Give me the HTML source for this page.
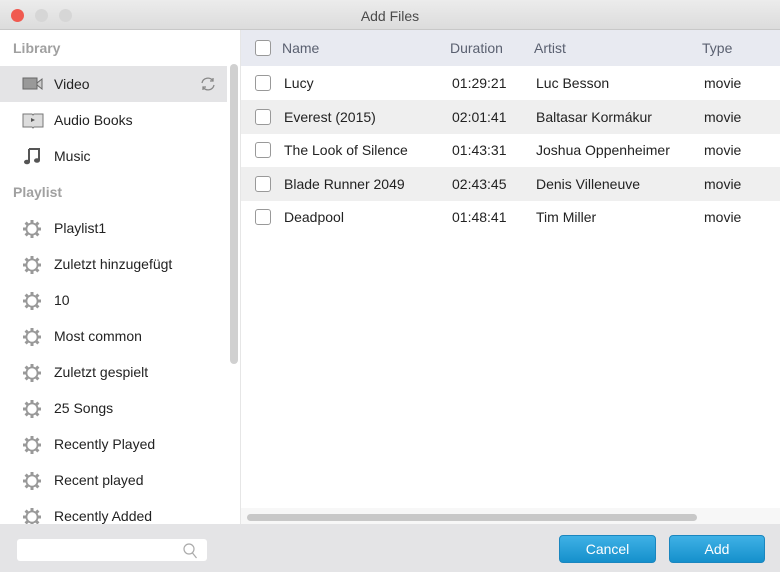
<!DOCTYPE html>
<html><head><style>
*{margin:0;padding:0;box-sizing:border-box}
body{width:780px;height:572px;font-family:"Liberation Sans",sans-serif;font-size:14px;color:#222;background:#fff;position:relative;overflow:hidden}
.title{position:absolute;left:0;top:0;width:780px;height:30px;background:linear-gradient(#ececec,#dcdcdc);border-bottom:1px solid #c8c8c8;text-align:center;line-height:32px;font-size:14px;color:#4a4a4a}
.dot{position:absolute;top:9px;width:13px;height:13px;border-radius:50%}
.side{position:absolute;left:0;top:30px;width:240px;height:494px;background:#fff;overflow:hidden}
.sh{position:absolute;left:13px;font-size:14px;font-weight:bold;color:#a0a0a0}
.si{position:absolute;left:0;width:227px;height:36px;line-height:36px;padding-left:54px}
.si svg{position:absolute;left:22px;top:9px}
.vs{position:absolute;left:230px;top:34px;width:8px;height:300px;border-radius:4px;background:#d0d0d0}
.tbl{position:absolute;left:240px;top:30px;width:540px;height:494px;background:#fff;border-left:1px solid #e6e6e6}
.row{position:absolute;left:0;width:540px;height:34px;line-height:34px}
.row span{position:absolute}
.cb{position:absolute;left:14px;top:9px;width:16px;height:16px;border:1px solid #999;border-radius:3px;background:#fff}
.bot{position:absolute;left:0;top:524px;width:780px;height:48px;background:#e4e4e6}
.btn{position:absolute;top:11px;height:28px;border-radius:4px;background:linear-gradient(#3fb1e6,#1590cc);border:1px solid #1a86bf;color:#fff;text-align:center;line-height:26px;font-size:14px}
</style></head><body>
<div class="title">Add Files
<div class="dot" style="left:11px;background:#f05a50"></div>
<div class="dot" style="left:35px;background:#d6d6d6"></div>
<div class="dot" style="left:59px;background:#d6d6d6"></div>
</div>
<div class="side">
<div class="sh" style="top:10px">Library</div>
<div class="si" style="top:36px;background:#e4e4e6">Video
<svg width="22" height="18" viewBox="0 0 22 18"><rect x="1" y="3" width="14" height="11" fill="#999" stroke="#666"/><path d="M15 8l5-4v10l-5-4z" fill="#ccc" stroke="#666"/></svg>
<svg style="left:200px;top:10px" width="16" height="16" viewBox="0 0 16 16" fill="none" stroke="#888" stroke-width="1.3"><path d="M2 7a6 6 0 0 1 11-2M14 9a6 6 0 0 1-11 2"/><path d="M13 2v3h-3M3 14v-3h3"/></svg></div>
<div class="si" style="top:72px">Audio Books
<svg width="22" height="18" viewBox="0 0 22 18"><path d="M1 3h9l1 1 1-1h9v13h-9l-1 1-1-1H1z" fill="#ddd" stroke="#777"/><path d="M9 7l4 2-4 2z" fill="#555"/></svg></div>
<div class="si" style="top:108px">Music
<svg width="22" height="18" viewBox="0 0 22 18"><path d="M7 2h10v11" stroke="#555" stroke-width="2" fill="none"/><path d="M7 2v13" stroke="#555" stroke-width="2"/><ellipse cx="5" cy="15" rx="3" ry="2.3" fill="#555"/><ellipse cx="15" cy="13.5" rx="3" ry="2.3" fill="#555"/></svg></div>
<div class="sh" style="top:154px">Playlist</div>
<svg width="0" height="0" style="position:absolute"><defs><g id="g"><circle cx="10" cy="10" r="6.5" fill="#999"/><g stroke="#999" stroke-width="3"><path d="M10 1v18M1 10h18M3.6 3.6l12.8 12.8M16.4 3.6L3.6 16.4"/></g><circle cx="10" cy="10" r="4.7" fill="#fff"/></g></defs></svg>
<div class="si" style="top:180px">Playlist1<svg width="22" height="20"><use href="#g"/></svg></div>
<div class="si" style="top:216px">Zuletzt hinzugefügt<svg width="22" height="20"><use href="#g"/></svg></div>
<div class="si" style="top:252px">10<svg width="22" height="20"><use href="#g"/></svg></div>
<div class="si" style="top:288px">Most common<svg width="22" height="20"><use href="#g"/></svg></div>
<div class="si" style="top:324px">Zuletzt gespielt<svg width="22" height="20"><use href="#g"/></svg></div>
<div class="si" style="top:360px">25 Songs<svg width="22" height="20"><use href="#g"/></svg></div>
<div class="si" style="top:396px">Recently Played<svg width="22" height="20"><use href="#g"/></svg></div>
<div class="si" style="top:432px">Recent played<svg width="22" height="20"><use href="#g"/></svg></div>
<div class="si" style="top:468px">Recently Added<svg width="22" height="20"><use href="#g"/></svg></div>
<div class="vs"></div>
</div>
<div class="tbl">
<div class="row" style="top:0;height:36px;line-height:36px;background:#e8eaf1;color:#5a6070"><div class="cb" style="top:10px"></div><span style="left:41px">Name</span><span style="left:209px">Duration</span><span style="left:293px">Artist</span><span style="left:461px">Type</span></div>
<div class="row" style="top:36px"><div class="cb"></div><span style="left:43px">Lucy</span><span style="left:211px">01:29:21</span><span style="left:295px">Luc Besson</span><span style="left:463px">movie</span></div>
<div class="row" style="top:70px;background:#efefef"><div class="cb"></div><span style="left:43px">Everest (2015)</span><span style="left:211px">02:01:41</span><span style="left:295px">Baltasar Kormákur</span><span style="left:463px">movie</span></div>
<div class="row" style="top:103px"><div class="cb"></div><span style="left:43px">The Look of Silence</span><span style="left:211px">01:43:31</span><span style="left:295px">Joshua Oppenheimer</span><span style="left:463px">movie</span></div>
<div class="row" style="top:137px;background:#efefef"><div class="cb"></div><span style="left:43px">Blade Runner 2049</span><span style="left:211px">02:43:45</span><span style="left:295px">Denis Villeneuve</span><span style="left:463px">movie</span></div>
<div class="row" style="top:170px"><div class="cb"></div><span style="left:43px">Deadpool</span><span style="left:211px">01:48:41</span><span style="left:295px">Tim Miller</span><span style="left:463px">movie</span></div>
<div style="position:absolute;left:0;top:478px;width:540px;height:16px;background:#f7f7f7"></div>
<div style="position:absolute;left:6px;top:484px;width:450px;height:7px;border-radius:4px;background:#c8c8c8"></div>
</div>
<div class="bot">
<div style="position:absolute;left:17px;top:15px;width:190px;height:22px;background:#fff;border-radius:3px"></div>
<svg style="position:absolute;left:182px;top:18px" width="16" height="17" viewBox="0 0 16 17" fill="none" stroke="#aaa" stroke-width="1.2"><circle cx="7" cy="7" r="5"/><path d="M10.5 11l4 5"/></svg>
<div class="btn" style="left:559px;width:97px">Cancel</div>
<div class="btn" style="left:669px;width:96px">Add</div>
</div>
</body></html>
